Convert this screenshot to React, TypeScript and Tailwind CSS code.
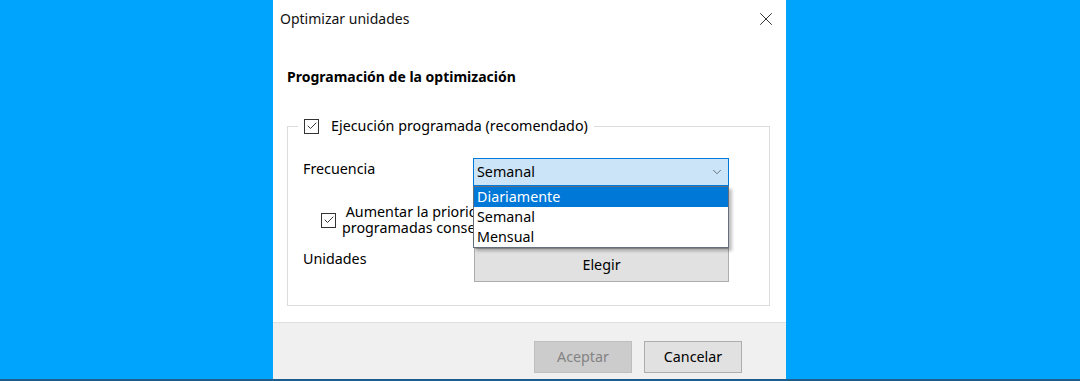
// Diálogo "Optimizar unidades" con la lista de frecuencia desplegada.
import { Check, ChevronDown, X } from 'lucide-react'

const FONT = { fontFamily: '"Noto Sans", "Open Sans", sans-serif' }

function Casilla() {
  return (
    <div className="w-[15px] h-[15px] border border-[#333] bg-white grid place-items-center shrink-0">
      <Check className="w-[12px] h-[12px] text-[#222]" strokeWidth={1.8} />
    </div>
  )
}

export default function App() {
  return (
    <div
      className="w-[1080px] h-[381px] bg-[#00a4fc] flex flex-col overflow-hidden text-[#000]"
      style={FONT}
    >
      <div className="flex-1 flex pl-[273px]">
        <div className="w-[513px] h-full bg-white flex flex-col">
          {/* barra de título */}
          <div className="h-[37px] flex items-center justify-between pl-[7px] pr-[9px]">
            <span className="text-[14px] text-[#111]">Optimizar unidades</span>
            <X className="w-[22px] h-[22px] text-[#222]" strokeWidth={1} />
          </div>

          <div className="flex-1 flex flex-col px-[14px] pr-[16px]">
            <div className="mt-[29px] text-[14px] font-bold">Programación de la optimización</div>

            {/* grupo */}
            <div className="relative mt-[39px] h-[180px] border border-[#dcdcdc]">
              <div className="absolute -top-[10px] left-[10px] flex items-center gap-[12px] bg-white px-[6px]">
                <Casilla />
                <span className="text-[14.3px] leading-[18px]">Ejecución programada (recomendado)</span>
              </div>

              <div className="flex flex-col pt-[31px] pl-[15px] pr-[40px]">
                <div className="flex items-start justify-between">
                  <span className="text-[14.3px] leading-[20px] mt-[1px]">Frecuencia</span>
                  <div className="relative w-[256px]">
                    <div className="h-[28px] bg-[#cce4f7] border border-[#0078d7] flex items-center justify-between pl-[3px] pr-[4px]">
                      <span className="text-[14.3px]">Semanal</span>
                      <ChevronDown className="w-[14px] h-[14px] text-[#444]" strokeWidth={1.2} />
                    </div>
                    {/* lista desplegada */}
                    <div className="absolute left-0 top-[28px] w-[256px] bg-white border border-[#646f7b] z-10 shadow-[3px_3px_3px_rgba(0,0,0,0.25)] flex flex-col text-[14.3px] leading-[20px]">
                      <div className="bg-[#0078d7] text-white pl-[3px]">Diariamente</div>
                      <div className="pl-[3px]">Semanal</div>
                      <div className="pl-[3px]">Mensual</div>
                    </div>
                  </div>
                </div>

                <div className="flex items-center gap-[6px] mt-[18px] pl-[18px]">
                  <Casilla />
                  <div className="w-[392px] text-[14.3px] leading-[16px]">
                    &nbsp;Aumentar la prioridad si se pierden tres ejecuciones programadas consecutivas
                  </div>
                </div>

                <div className="flex items-start justify-between mt-[12px]">
                  <span className="text-[14.3px] leading-[20px] mt-[1px]">Unidades</span>
                  <div className="w-[255px] h-[34px] bg-[#e1e1e1] border border-[#adadad] grid place-items-center text-[14.3px]">
                    Elegir
                  </div>
                </div>
              </div>
            </div>
          </div>

          {/* pie */}
          <div className="h-[57px] bg-[#f0f0f0] border-t border-[#dfdfdf] flex items-start justify-end gap-[12px] pr-[44px] pt-[18px]">
            <div className="w-[98px] h-[32px] bg-[#cccccc] border border-[#bfbfbf] grid place-items-center text-[14.3px] text-[#838383]">
              Aceptar
            </div>
            <div className="w-[98px] h-[32px] bg-[#e1e1e1] border border-[#adadad] grid place-items-center text-[14.3px]">
              Cancelar
            </div>
          </div>
        </div>
      </div>
      <div className="h-[2px] bg-[#1b5d8e]" />
    </div>
  )
}
